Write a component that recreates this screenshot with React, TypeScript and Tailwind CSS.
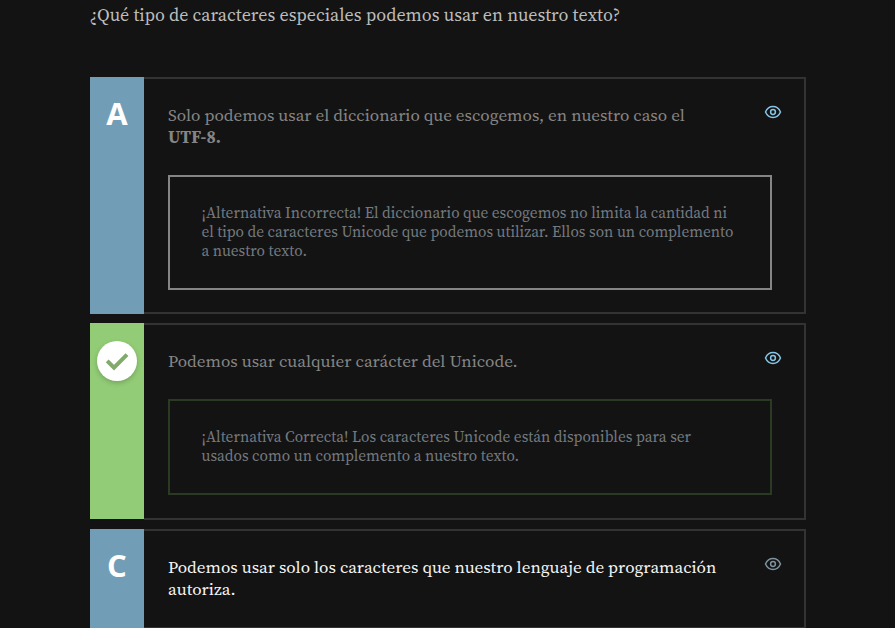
import type { ReactNode } from 'react';

function Line({ children }: { children: ReactNode }) {
  return <span className="block whitespace-nowrap">{children}</span>;
}

function Eye({ color }: { color: string }) {
  return (
    <svg viewBox="0 0 18 14" className={`mt-[26px] h-[14px] w-[18px] shrink-0 ${color}`} fill="none" stroke="currentColor" strokeWidth="1.5">
      <path d="M1.5 7C3 3.6 5.8 1.6 9 1.6S15 3.6 16.5 7C15 10.4 12.2 12.4 9 12.4S3 10.4 1.5 7Z" />
      <circle cx="9" cy="7" r="2.4" />
    </svg>
  );
}

function Card({ badge, strip, height, eye, text, children }: { badge: ReactNode; strip: string; height: string; eye: string; text: ReactNode; children?: ReactNode }) {
  return (
    <section className={`flex w-[716px] shrink-0 ${height}`}>
      <div className={`flex w-[54px] shrink-0 justify-center ${strip}`}>{badge}</div>
      <div className="flex-1 border-2 border-l-0 border-[#333333] pl-6">
        <div className="flex items-start justify-between pr-[22px]">
          <div className="pt-[25px] pb-px text-[17.1px] leading-[22px]">{text}</div>
          <Eye color={eye} />
        </div>
        {children}
      </div>
    </section>
  );
}

function Letter({ children }: { children: string }) {
  return <span className="mt-[15px] font-['Open_Sans',sans-serif] text-[31px] leading-[43px] font-bold text-white">{children}</span>;
}

function Check() {
  return (
    <span className="mt-[18px] flex h-10 w-10 items-center justify-center rounded-full bg-white shadow-[0_2px_5px_rgba(0,0,0,0.2)]">
      <svg viewBox="0 0 40 40" className="h-10 w-10" fill="none" stroke="#82aa6b" strokeWidth="4">
        <path d="M10.2 19.8L17 26.6L30 13.6" />
      </svg>
    </span>
  );
}

export default function App() {
  return (
    <main className="h-[628px] overflow-hidden bg-[#131313] pl-[90px] font-['Source_Serif_Pro','Source_Serif_4','Liberation_Serif',serif]">
      <h1 className="-ml-[0.5px] h-[77px] pt-1 text-[18px] leading-[22px] text-[#bdbdbd]">
        <Line>¿Qué tipo de caracteres especiales podemos usar en nuestro texto?</Line>
      </h1>
      <div className="flex flex-col gap-[9px]">
        <Card
          height="h-[237px]"
          strip="bg-[#719eb6]"
          eye="text-[#86c5e5]"
          badge={<Letter>A</Letter>}
          text={
            <div className="text-[#858585]">
              <Line>Solo podemos usar el diccionario que escogemos, en nuestro caso el</Line>
              <Line><b>UTF-8.</b></Line>
            </div>
          }
        >
          <div className="mt-[26px] h-[115px] w-[604px] border-2 border-[#858585] pl-[31.5px] pt-[26px] text-[15.3px] leading-[19px] text-[#737a80]">
            <Line>¡Alternativa Incorrecta! El diccionario que escogemos no limita la cantidad ni</Line>
            <Line>el tipo de caracteres Unicode que podemos utilizar. Ellos son un complemento</Line>
            <Line>a nuestro texto.</Line>
          </div>
        </Card>
        <Card
          height="h-[197px]"
          strip="bg-[#92cc76] mb-px"
          eye="text-[#86c5e5]"
          badge={<Check />}
          text={
            <div className="text-[#858585]">
              <Line>Podemos usar cualquier carácter del Unicode.</Line>
            </div>
          }
        >
          <div className="mt-[26px] h-[96px] w-[604px] border-2 border-[#2b3a23] pl-[31.5px] pt-[26px] text-[15.3px] leading-[19px] text-[#737a80]">
            <Line>¡Alternativa Correcta! Los caracteres Unicode están disponibles para ser</Line>
            <Line>usados como un complemento a nuestro texto.</Line>
          </div>
        </Card>
        <Card
          height="h-[100px]"
          strip="bg-[#719eb6]"
          eye="text-[#7d929f]"
          badge={<Letter>C</Letter>}
          text={
            <div className="text-[#f5f5f5]">
              <Line>Podemos usar solo los caracteres que nuestro lenguaje de programación</Line>
              <Line>autoriza.</Line>
            </div>
          }
        />
      </div>
    </main>
  );
}
